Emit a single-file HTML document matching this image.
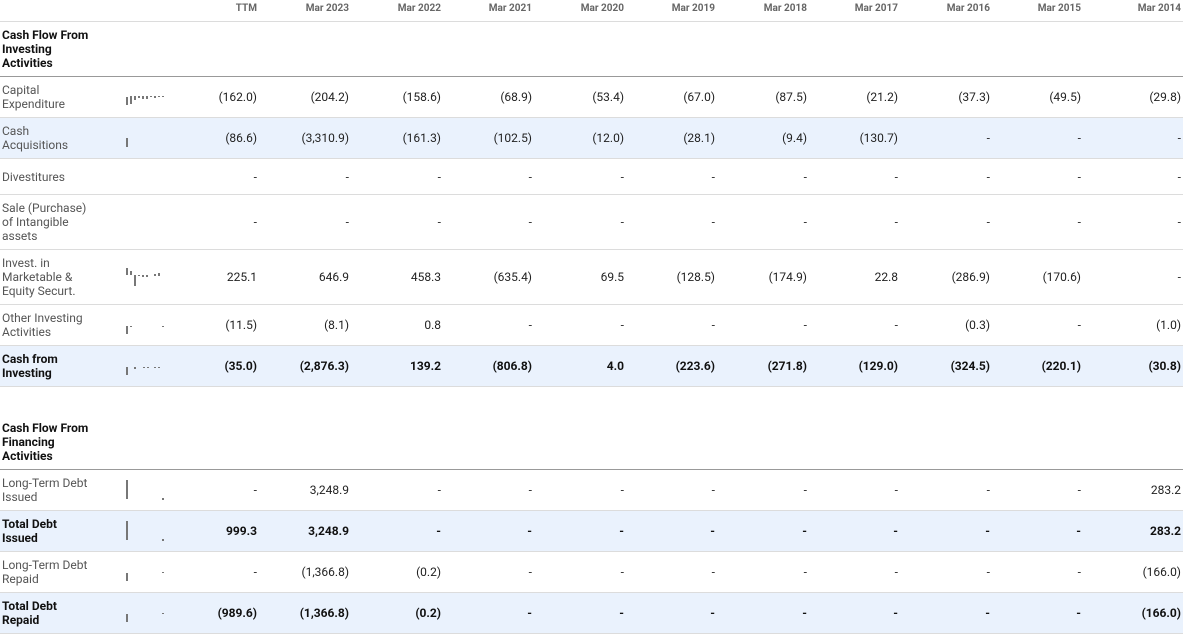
<!DOCTYPE html>
<html><head><meta charset="utf-8"><style>
body{margin:0;width:1183px;height:634px;overflow:hidden;background:#fff;font-family:"Roboto","Liberation Sans",sans-serif;position:relative;color:#222}
.r{position:absolute;left:0;width:1183px;border-bottom:1px solid #dcdcdc}
.b{background:#eaf2fd}
.l{position:absolute;left:2px;width:89px;font-size:12px;line-height:14px;color:#555}
.bold .l,.sec .l{color:#111;font-weight:bold}
.v{position:absolute;width:80px;text-align:right;font-size:12px;line-height:14px;color:#222}
.bold .v{font-weight:bold;color:#111}
.h{position:absolute;width:80px;text-align:right;font-size:10px;font-weight:bold;color:#666;top:3px}
.s{position:absolute;background:#777;width:2px}
.c1{left:177px}.c2{left:269px}.c3{left:361px}.c4{left:452px}.c5{left:544px}.c6{left:635px}.c7{left:727px}.c8{left:818px}.c9{left:910px}.c10{left:1001px}.c11{left:1101px}
</style></head><body>
<div class="r" style="top:0;height:21px">
<span class="h c1">TTM</span><span class="h c2">Mar 2023</span><span class="h c3">Mar 2022</span><span class="h c4">Mar 2021</span><span class="h c5">Mar 2020</span><span class="h c6">Mar 2019</span><span class="h c7">Mar 2018</span><span class="h c8">Mar 2017</span><span class="h c9">Mar 2016</span><span class="h c10">Mar 2015</span><span class="h c11">Mar 2014</span></div>
<div class="r sec" style="top:22px;height:54px;border-bottom:1px solid #999"><div class="l" style="top:6px">Cash Flow From Investing Activities</div></div>

<div class="r" style="top:77px;height:40px"><div class="l" style="top:6px">Capital Expenditure</div>
<i class="s" style="left:126px;top:20px;height:8px"></i><i class="s" style="left:130px;top:19px;height:8px"></i><i class="s" style="left:134px;top:19px;height:4px"></i><i class="s" style="left:138px;top:19px;height:2px"></i><i class="s" style="left:142px;top:19px;height:3px"></i><i class="s" style="left:146px;top:19px;height:3px"></i><i class="s" style="left:150px;top:19px;height:1px"></i><i class="s" style="left:154px;top:19px;height:2px"></i><i class="s" style="left:158px;top:19px;height:1px"></i><i class="s" style="left:162px;top:19px;height:1px"></i>
<span class="v c1" style="top:13px">(162.0)</span><span class="v c2" style="top:13px">(204.2)</span><span class="v c3" style="top:13px">(158.6)</span><span class="v c4" style="top:13px">(68.9)</span><span class="v c5" style="top:13px">(53.4)</span><span class="v c6" style="top:13px">(67.0)</span><span class="v c7" style="top:13px">(87.5)</span><span class="v c8" style="top:13px">(21.2)</span><span class="v c9" style="top:13px">(37.3)</span><span class="v c10" style="top:13px">(49.5)</span><span class="v c11" style="top:13px">(29.8)</span></div>

<div class="r b" style="top:118px;height:40px"><div class="l" style="top:6px">Cash<br>Acquisitions</div>
<i class="s" style="left:126px;top:20px;height:9px"></i>
<span class="v c1" style="top:13px">(86.6)</span><span class="v c2" style="top:13px">(3,310.9)</span><span class="v c3" style="top:13px">(161.3)</span><span class="v c4" style="top:13px">(102.5)</span><span class="v c5" style="top:13px">(12.0)</span><span class="v c6" style="top:13px">(28.1)</span><span class="v c7" style="top:13px">(9.4)</span><span class="v c8" style="top:13px">(130.7)</span><span class="v c9" style="top:13px">-</span><span class="v c10" style="top:13px">-</span><span class="v c11" style="top:13px">-</span></div>

<div class="r" style="top:159px;height:35px"><div class="l" style="top:11px">Divestitures</div>
<span class="v c1" style="top:11px">-</span><span class="v c2" style="top:11px">-</span><span class="v c3" style="top:11px">-</span><span class="v c4" style="top:11px">-</span><span class="v c5" style="top:11px">-</span><span class="v c6" style="top:11px">-</span><span class="v c7" style="top:11px">-</span><span class="v c8" style="top:11px">-</span><span class="v c9" style="top:11px">-</span><span class="v c10" style="top:11px">-</span><span class="v c11" style="top:11px">-</span></div>

<div class="r" style="top:195px;height:54px"><div class="l" style="top:6px">Sale (Purchase)<br>of Intangible<br>assets</div>
<span class="v c1" style="top:20px">-</span><span class="v c2" style="top:20px">-</span><span class="v c3" style="top:20px">-</span><span class="v c4" style="top:20px">-</span><span class="v c5" style="top:20px">-</span><span class="v c6" style="top:20px">-</span><span class="v c7" style="top:20px">-</span><span class="v c8" style="top:20px">-</span><span class="v c9" style="top:20px">-</span><span class="v c10" style="top:20px">-</span><span class="v c11" style="top:20px">-</span></div>

<div class="r" style="top:250px;height:54px"><div class="l" style="top:6px">Invest. in<br>Marketable &amp;<br>Equity Securt.</div>
<i class="s" style="left:126px;top:18px;height:7px"></i><i class="s" style="left:130px;top:21px;height:4px"></i><i class="s" style="left:134px;top:25px;height:11px"></i><i class="s" style="left:138px;top:25px;height:1px"></i><i class="s" style="left:142px;top:25px;height:2px"></i><i class="s" style="left:146px;top:25px;height:2px"></i><i class="s" style="left:154px;top:24px;height:2px"></i><i class="s" style="left:158px;top:23px;height:3px"></i>
<span class="v c1" style="top:20px">225.1</span><span class="v c2" style="top:20px">646.9</span><span class="v c3" style="top:20px">458.3</span><span class="v c4" style="top:20px">(635.4)</span><span class="v c5" style="top:20px">69.5</span><span class="v c6" style="top:20px">(128.5)</span><span class="v c7" style="top:20px">(174.9)</span><span class="v c8" style="top:20px">22.8</span><span class="v c9" style="top:20px">(286.9)</span><span class="v c10" style="top:20px">(170.6)</span><span class="v c11" style="top:20px">-</span></div>

<div class="r" style="top:305px;height:40px"><div class="l" style="top:6px">Other Investing<br>Activities</div>
<i class="s" style="left:126px;top:21px;height:8px"></i><i class="s" style="left:130px;top:21px;height:1px"></i><i class="s" style="left:162px;top:21px;height:1px"></i>
<span class="v c1" style="top:13px">(11.5)</span><span class="v c2" style="top:13px">(8.1)</span><span class="v c3" style="top:13px">0.8</span><span class="v c4" style="top:13px">-</span><span class="v c5" style="top:13px">-</span><span class="v c6" style="top:13px">-</span><span class="v c7" style="top:13px">-</span><span class="v c8" style="top:13px">-</span><span class="v c9" style="top:13px">(0.3)</span><span class="v c10" style="top:13px">-</span><span class="v c11" style="top:13px">(1.0)</span></div>

<div class="r b bold" style="top:346px;height:40px"><div class="l" style="top:6px">Cash from<br>Investing</div>
<i class="s" style="left:126px;top:21px;height:8px"></i><i class="s" style="left:134px;top:21px;height:2px"></i><i class="s" style="left:143px;top:21px;height:1px"></i><i class="s" style="left:147px;top:21px;height:1px"></i><i class="s" style="left:154px;top:21px;height:1px"></i><i class="s" style="left:158px;top:21px;height:1px"></i>
<span class="v c1" style="top:13px">(35.0)</span><span class="v c2" style="top:13px">(2,876.3)</span><span class="v c3" style="top:13px">139.2</span><span class="v c4" style="top:13px">(806.8)</span><span class="v c5" style="top:13px">4.0</span><span class="v c6" style="top:13px">(223.6)</span><span class="v c7" style="top:13px">(271.8)</span><span class="v c8" style="top:13px">(129.0)</span><span class="v c9" style="top:13px">(324.5)</span><span class="v c10" style="top:13px">(220.1)</span><span class="v c11" style="top:13px">(30.8)</span></div>

<div class="r sec" style="top:415px;height:54px;border-bottom:1px solid #999"><div class="l" style="top:6px">Cash Flow From Financing Activities</div></div>

<div class="r" style="top:470px;height:40px"><div class="l" style="top:6px">Long-Term Debt<br>Issued</div>
<i class="s" style="left:126px;top:10px;height:19px"></i><i class="s" style="left:162px;top:28px;height:2px"></i>
<span class="v c1" style="top:13px">-</span><span class="v c2" style="top:13px">3,248.9</span><span class="v c3" style="top:13px">-</span><span class="v c4" style="top:13px">-</span><span class="v c5" style="top:13px">-</span><span class="v c6" style="top:13px">-</span><span class="v c7" style="top:13px">-</span><span class="v c8" style="top:13px">-</span><span class="v c9" style="top:13px">-</span><span class="v c10" style="top:13px">-</span><span class="v c11" style="top:13px">283.2</span></div>

<div class="r b bold" style="top:511px;height:40px"><div class="l" style="top:6px">Total Debt<br>Issued</div>
<i class="s" style="left:126px;top:10px;height:19px"></i><i class="s" style="left:162px;top:28px;height:2px"></i>
<span class="v c1" style="top:13px">999.3</span><span class="v c2" style="top:13px">3,248.9</span><span class="v c3" style="top:13px">-</span><span class="v c4" style="top:13px">-</span><span class="v c5" style="top:13px">-</span><span class="v c6" style="top:13px">-</span><span class="v c7" style="top:13px">-</span><span class="v c8" style="top:13px">-</span><span class="v c9" style="top:13px">-</span><span class="v c10" style="top:13px">-</span><span class="v c11" style="top:13px">283.2</span></div>

<div class="r" style="top:552px;height:40px"><div class="l" style="top:6px">Long-Term Debt<br>Repaid</div>
<i class="s" style="left:126px;top:21px;height:8px"></i><i class="s" style="left:162px;top:20px;height:1px"></i>
<span class="v c1" style="top:13px">-</span><span class="v c2" style="top:13px">(1,366.8)</span><span class="v c3" style="top:13px">(0.2)</span><span class="v c4" style="top:13px">-</span><span class="v c5" style="top:13px">-</span><span class="v c6" style="top:13px">-</span><span class="v c7" style="top:13px">-</span><span class="v c8" style="top:13px">-</span><span class="v c9" style="top:13px">-</span><span class="v c10" style="top:13px">-</span><span class="v c11" style="top:13px">(166.0)</span></div>

<div class="r b bold" style="top:593px;height:40px"><div class="l" style="top:6px">Total Debt<br>Repaid</div>
<i class="s" style="left:126px;top:21px;height:8px"></i><i class="s" style="left:162px;top:20px;height:1px"></i>
<span class="v c1" style="top:13px">(989.6)</span><span class="v c2" style="top:13px">(1,366.8)</span><span class="v c3" style="top:13px">(0.2)</span><span class="v c4" style="top:13px">-</span><span class="v c5" style="top:13px">-</span><span class="v c6" style="top:13px">-</span><span class="v c7" style="top:13px">-</span><span class="v c8" style="top:13px">-</span><span class="v c9" style="top:13px">-</span><span class="v c10" style="top:13px">-</span><span class="v c11" style="top:13px">(166.0)</span></div>
</body></html>
